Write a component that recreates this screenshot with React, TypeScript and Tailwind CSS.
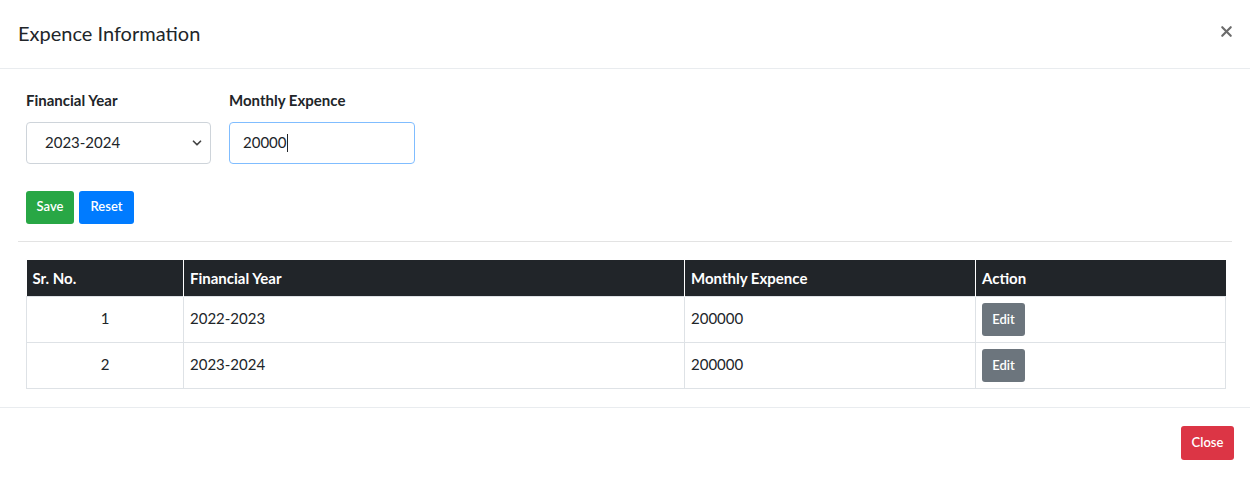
import { X, ChevronDown } from "lucide-react";

const rows = [
  { sr: 1, year: "2022-2023", amount: "200000" },
  { sr: 2, year: "2023-2024", amount: "200000" },
];

export default function App() {
  return (
    <div
      className="w-[1250px] h-[477px] bg-white text-[#212529] flex flex-col"
      style={{ fontFamily: "Lato, 'Noto Sans', sans-serif" }}
    >
      {/* Header */}
      <div className="h-[69px] flex items-center justify-between pl-[18px] pr-[15px] border-b border-[#e9ecef]">
        <h5 className="text-[20px] leading-none -mt-[2px]">Expence Information</h5>
        <X size={17} strokeWidth={3} className="text-[#6b6b6b] -mt-[6px]" />
      </div>

      {/* Body */}
      <div className="px-[18px] pt-[20px] pb-[18px]">
        <div className="flex gap-[18px] px-2">
          <div className="w-[185px]">
            <label className="block text-[15px] font-bold mb-[10px]">Financial Year</label>
            <div className="h-[42px] border border-[#ced4da] rounded flex items-center justify-between pl-[18px] pr-[6px] text-[15px]">
              <span>2023-2024</span>
              <ChevronDown size={14} strokeWidth={3} className="text-[#444]" />
            </div>
          </div>
          <div className="w-[186px]">
            <label className="block text-[15px] font-bold mb-[10px]">Monthly Expence</label>
            <div className="h-[42px] border border-[#80bdff] rounded flex items-center pl-[13px] text-[15px]">
              <span>20000</span>
              <span className="w-px h-[18px] bg-[#212529]" />
            </div>
          </div>
        </div>

        <div className="flex gap-[5px] px-2 mt-[27px]">
          <button className="h-[33px] w-[48px] rounded-[3px] bg-[#28a745] text-white text-[13px] font-semibold">
            Save
          </button>
          <button className="h-[33px] w-[55px] rounded-[3px] bg-[#007bff] text-white text-[13px] font-semibold">
            Reset
          </button>
        </div>

        <hr className="mt-[17px] mb-[18px] border-[#e3e3e3]" />

        <div className="px-2">
          <table className="w-[1200px] border-collapse text-[15px]">
            <thead>
              <tr className="bg-[#212529] text-white h-[37px]">
                <th className="w-[157px] text-left font-bold px-[6px] border-r border-white">Sr. No.</th>
                <th className="w-[501px] text-left font-bold px-[6px] border-r border-white">Financial Year</th>
                <th className="w-[291px] text-left font-bold px-[6px] border-r border-white">Monthly Expence</th>
                <th className="text-left font-bold px-[6px]">Action</th>
              </tr>
            </thead>
            <tbody>
              {rows.map((r) => (
                <tr key={r.sr} className="h-[46px]">
                  <td className="border border-[#dee2e6] text-center align-top pt-[10px]">{r.sr}</td>
                  <td className="border border-[#dee2e6] px-[6px] align-top pt-[10px]">{r.year}</td>
                  <td className="border border-[#dee2e6] px-[6px] align-top pt-[10px]">{r.amount}</td>
                  <td className="border border-[#dee2e6] px-[6px] align-middle">
                    <button className="h-[33px] w-[43px] rounded-[3px] bg-[#6c757d] text-white text-[13px] font-semibold">
                      Edit
                    </button>
                  </td>
                </tr>
              ))}
            </tbody>
          </table>
        </div>
      </div>

      {/* Footer */}
      <div className="border-t border-[#e9ecef] flex justify-end pr-4 pt-[18px]">
        <button className="h-[34px] w-[53px] rounded-[3px] bg-[#dc3545] text-white text-[13px] font-semibold">
          Close
        </button>
      </div>
    </div>
  );
}
